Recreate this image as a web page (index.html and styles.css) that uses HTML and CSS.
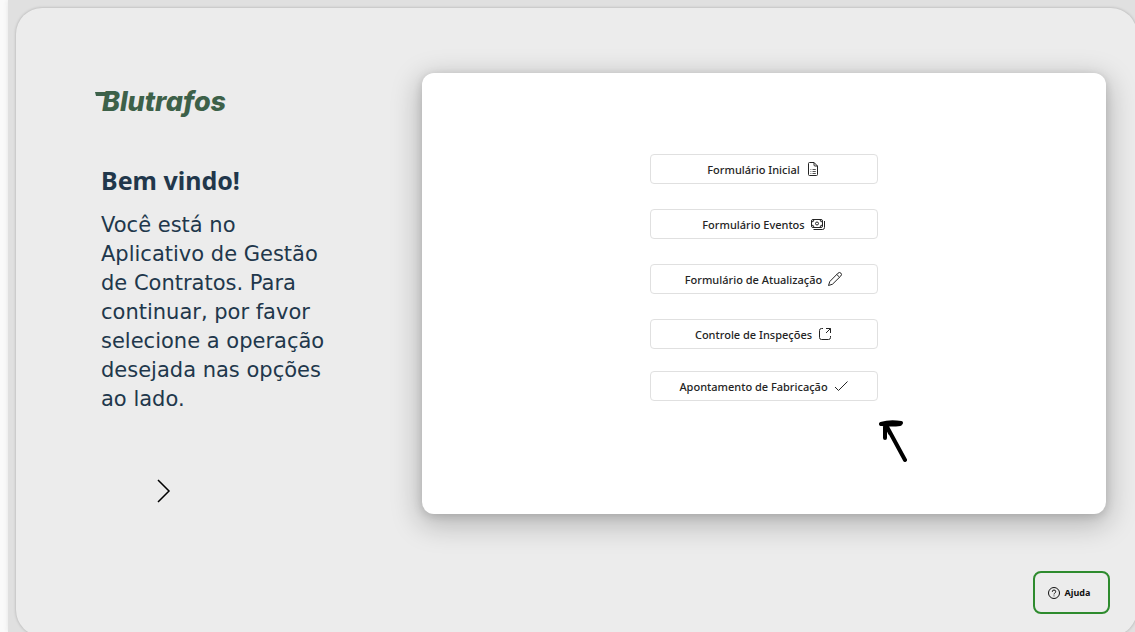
FILE: index.html
```html
<!DOCTYPE html>
<html lang="pt-BR">
<head>
<meta charset="utf-8">
<meta name="viewport" content="width=device-width, initial-scale=1">
<title>Blutrafos - Gestão de Contratos</title>
<link rel="stylesheet" href="styles.css">
</head>
<body>
<div class="app">
<main class="panel">
  <section class="intro">
    <div class="logo">
      <svg class="logo-bar" viewBox="0 0 14 4" aria-hidden="true"><path d="M0 0H14L13 4H1Z"/></svg>
      <span>Blutrafos</span>
    </div>
    <h1 class="title">Bem vindo!</h1>
    <p class="text">Você está no Aplicativo de Gestão de Contratos. Para continuar, por favor selecione a operação desejada nas opções ao lado.</p>
    <button class="next" type="button" aria-label="Continuar">
      <svg viewBox="0 0 14 24"><path d="M1 1L12 12L1 23"/></svg>
    </button>
  </section>
  <div class="content">
    <section class="card">
      <nav class="menu">
        <div class="menu-group">
          <button class="option" type="button">Formulário Inicial
            <svg class="icon" viewBox="0 0 16 16"><path d="M4.500 1.500H9L12.500 5V13.500Q12.500 14.500 11.500 14.500H4.500Q3.500 14.500 3.500 13.500V2.500Q3.500 1.500 4.500 1.500ZM9 1.500V4Q9 5 10 5H12.500"/><path class="fine" d="M5.500 8.500H6.300M7.500 8.500H10.800M5.500 10.500H6.300M7.500 10.500H10.800M5.500 12.500H6.300M7.500 12.500H10.800"/></svg>
          </button>
          <button class="option" type="button">Formulário Eventos
            <svg class="icon" viewBox="0 0 16 16"><rect x="1.500" y="3.500" width="11" height="8" rx="1.500"/><circle cx="7" cy="7.500" r="1.500"/><path d="M1.500 6Q4 6 4 3.500M10 3.500Q10 6 12.500 6M1.500 9Q4 9 4 11.500M10 11.500Q10 9 12.500 9M14.500 5V11.500Q14.500 13.500 12.500 13.500H3.500"/></svg>
          </button>
          <button class="option" type="button">Formulário de Atualização
            <svg class="icon" viewBox="0 0 16 16"><path d="M11 2.200Q12.500 .8 13.900 2.100Q15.200 3.500 13.800 5L5.500 13.200L1.500 14.500L2.800 10.500ZM9.800 3.500L12.500 6.200"/></svg>
          </button>
          <button class="option" type="button">Controle de Inspeções
            <svg class="icon" viewBox="0 0 16 16"><path d="M6 2.500H4.500Q2.500 2.500 2.500 4.500V11.500Q2.500 13.500 4.500 13.500H11.500Q13.500 13.500 13.500 11.500V10M9 2.500H13.500V7M13.500 2.500L9 7"/></svg>
          </button>
        </div>
        <button class="option" type="button">Apontamento de Fabricação
          <svg class="icon" viewBox="0 0 16 16"><path d="M2 9L5.500 12.500L14.500 3.500"/></svg>
        </button>
        <svg class="pointer" viewBox="0 0 30 44" aria-hidden="true">
          <path d="M3 5Q12 2 23 4M4 5Q14 6 22 5M7 5L7 19M8 6L27 41M8 6L12 14"/>
        </svg>
      </nav>
    </section>
    <button class="help" type="button">
      <svg class="help-icon" viewBox="0 0 14 14"><circle cx="7" cy="7" r="5.500"/><path d="M5.300 5.800Q5.300 4 7 4T8.700 5.700Q8.700 6.600 7.700 7.200Q7 7.600 7 8.400M7 9.500V10.300"/></svg>
      Ajuda
    </button>
  </div>
</main>
</div>
</body>
</html>
```
FILE: styles.css
```css
* {
  box-sizing: border-box;
}

body {
  margin: 0;
  height: 100vh;
  overflow: hidden;
  background: #fafafa;
  font-family: "Noto Sans", sans-serif;
}

button {
  font-family: inherit;
  cursor: pointer;
}

svg {
  fill: none;
  stroke: currentColor;
  flex: none;
}

.app {
  height: 100%;
  margin-left: 8px;
  padding: 8px 0 0 8px;
  background: #e0e0e0;
  box-shadow: 0 0 5px #e4e4e4;
}

.panel {
  display: flex;
  height: calc(100% + 4px);
  margin-right: -2px;
  border-radius: 26px;
  background: #ececec;
  box-shadow: 0 0 3px rgba(0, 0, 0, 0.25);
}

.intro {
  flex: none;
  width: 320px;
  padding: 79px 5px 0 85px;
  color: #21374b;
}

.logo {
  display: flex;
  margin-left: -6px;
  color: #3d6149;
  font: italic 800 27px/30px Inter, sans-serif;
}

.logo-bar {
  width: 14px;
  height: 4px;
  margin: 5px -7px 0 0;
  fill: currentColor;
  stroke: none;
}

.title {
  margin: 44px 0 0;
  font-size: 25px;
  line-height: 38px;
}

.text {
  margin: 12px 0 0;
  font-family: "DejaVu Sans", sans-serif;
  font-size: 21px;
  line-height: 29px;
}

.next {
  display: block;
  margin: 63px 0 0 54px;
  padding: 2px;
  border: 0;
  background: none;
  color: #000;
}

.next svg {
  display: block;
  width: 14px;
  height: 24px;
  stroke-width: 1.5;
}

.content {
  display: flex;
  flex: 1;
  flex-direction: column;
  padding: 65px 31px 22px 86px;
}

.card {
  display: flex;
  justify-content: center;
  min-height: 441px;
  padding: 81px 20px 20px;
  border-radius: 12px;
  background: #fff;
  box-shadow: 0 8px 28px 4px rgba(0, 0, 0, 0.22), 0 2px 10px rgba(0, 0, 0, 0.14);
}

.menu {
  position: relative;
  display: flex;
  flex-direction: column;
  align-self: flex-start;
  gap: 22px;
  width: 228px;
}

.menu-group {
  display: flex;
  flex-direction: column;
  gap: 25px;
}

.option {
  display: flex;
  align-items: center;
  justify-content: center;
  gap: 5px;
  height: 30px;
  padding: 0 8px;
  border: 1px solid #e0e0e0;
  border-radius: 4px;
  background: #fff;
  color: #242424;
  font-size: 11px;
  font-weight: 500;
}

.icon {
  width: 16px;
  height: 16px;
}

.fine {
  stroke-width: 0.8;
}

.pointer {
  position: absolute;
  top: 100%;
  left: 100%;
  width: 30px;
  height: 44px;
  margin-top: 18px;
  color: #000;
  stroke-width: 4;
  stroke-linecap: round;
}

.help {
  display: flex;
  align-items: center;
  align-self: flex-end;
  justify-content: center;
  gap: 4px;
  width: 77px;
  height: 44px;
  margin: 57px -4px 0 0;
  padding: 0 6px 0 0;
  border: 2px solid #2e8b2e;
  border-radius: 8px;
  background: none;
  color: #111;
  font-size: 9px;
  font-weight: 700;
}

.help-icon {
  width: 14px;
  height: 14px;
}
```
